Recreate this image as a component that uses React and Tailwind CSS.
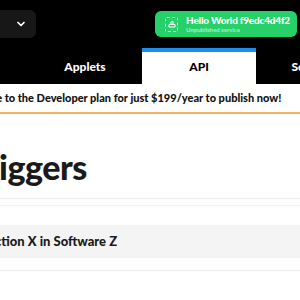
import { ChevronDown } from "lucide-react";

const tabs = ["Service", "Applets", "API", "Settings"];

const App = () => {
  return (
    <div className="w-[300px] h-[300px] overflow-hidden bg-white font-['Lato',sans-serif]">
      {/* HEADER */}
      <div className="h-[48px] bg-black flex items-center justify-between">
        <div className="ml-[-74px] w-[110px] h-[28px] rounded-md bg-[#171717] flex items-center justify-end pr-[9px]">
          <ChevronDown size={12} strokeWidth={3.5} className="text-white" />
        </div>
        <div className="mr-[3px] w-[142px] h-[26px] rounded-md bg-[#26d16a] flex items-center gap-[8px] pl-[10px] whitespace-nowrap">
          <div className="w-[13px] h-[15px] border border-dashed border-white/70 rounded-[2px] flex items-center justify-center shrink-0">
            <svg width="8" height="8" viewBox="0 0 8 8" fill="none" stroke="white" strokeWidth="1">
              <path d="M1 4.5h6v2.5h-6z" />
              <path d="M3 4.5V2l2 -1v3.5" />
            </svg>
          </div>
          <div className="flex flex-col leading-none">
            <span className="text-[10px] font-black text-white tracking-[-0.2px]">Hello World f9edc4d4f2</span>
            <span className="text-[6px] font-bold text-white/60 mt-[2px]">Unpublished service</span>
          </div>
        </div>
      </div>

      {/* TABS */}
      <div className="h-[36px] bg-black flex ml-[-86px]">
        {tabs.map((t) => (
          <div
            key={t}
            className={
              t === "API"
                ? "w-[114px] shrink-0 bg-white border-t-4 border-[#1b8fe8] flex items-center justify-center text-[12px] font-black text-black pb-[2px]"
                : "w-[114px] shrink-0 flex items-center justify-center text-[12px] font-black text-white pt-[2px]"
            }
          >
            {t}
          </div>
        ))}
      </div>

      {/* BANNER */}
      <div className="h-[30px] border-b-2 border-[#f2b35c] flex items-center ml-[-40px] whitespace-nowrap">
        <span className="text-[11px] font-black text-[#111]">
          Upgrade to the Developer plan for just $199/year to publish now!
        </span>
      </div>

      {/* TRIGGERS */}
      <div className="h-[85px] border-b border-[#ececec] flex items-end pb-[14px] ml-[-30px] whitespace-nowrap">
        <h1 className="text-[34px] font-black text-[#1a1a1a] leading-none tracking-[-0.5px]">Triggers</h1>
      </div>

      <div className="mt-[6px] border-t border-[#f3f3f3] pt-[19px] border-b border-b-[#ececec] pb-[12px]">
        <div className="h-[33px] bg-[#f4f4f4] flex items-center ml-[-14px] whitespace-nowrap">
          <span className="text-[13px] font-black text-[#1a1a1a]">Action X in Software Z</span>
        </div>
      </div>
    </div>
  );
};

export default App;
